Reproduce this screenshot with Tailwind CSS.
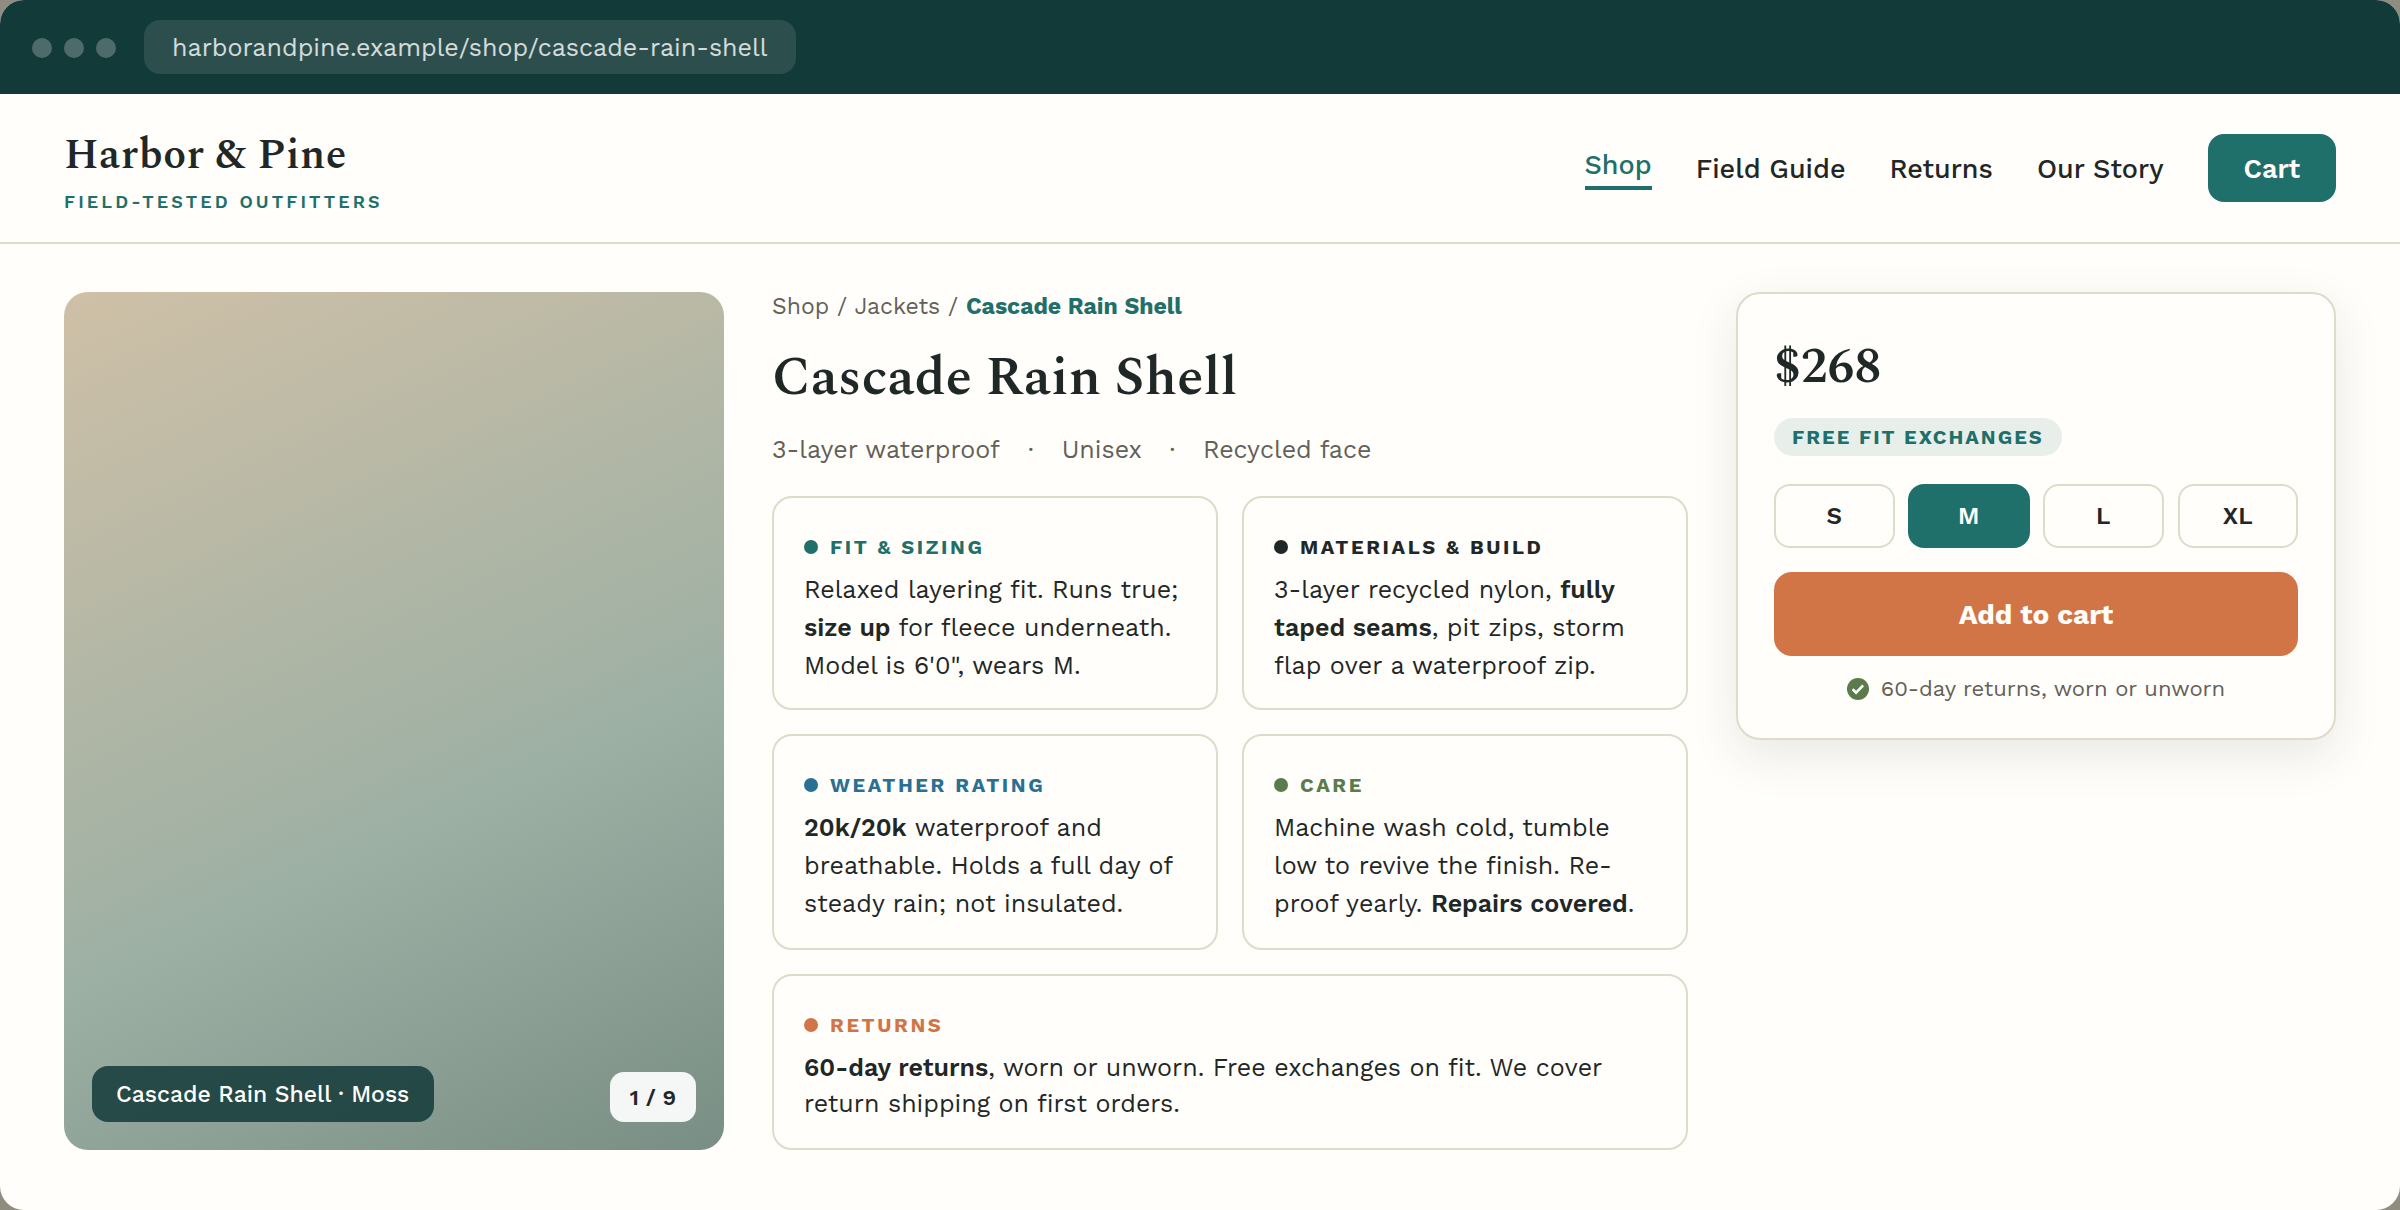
<!DOCTYPE html>
<html lang="en">
 <head>
  <meta charset="UTF-8"/>
  <meta name="viewport" content="width=device-width, initial-scale=1.0"/>
  <title>Cascade Rain Shell - Harbor &amp; Pine</title>
  <script src="https://cdn.jsdelivr.net/npm/@tailwindcss/browser@4"></script>
 </head>
 <body class="bg-[#8f8c80] font-['Work_Sans',Inter,sans-serif] text-[#1f2727]">
  <div class="h-[1210px] w-[2400px] overflow-hidden rounded-3xl bg-[#fffefa]">
   <!-- Browser bar -->
   <div class="flex h-[94px] items-center gap-7 bg-[#123a38] px-8">
    <div class="flex gap-3 pt-px">
     <span class="size-5 rounded-full bg-white/25"></span>
     <span class="size-5 rounded-full bg-white/25"></span>
     <span class="size-5 rounded-full bg-white/25"></span>
    </div>
    <div class="flex h-[54px] items-center rounded-2xl bg-white/11 pt-0.5 pr-[29px] pl-7 text-[25px] text-white/80">
     harborandpine.example/shop/cascade-rain-shell
    </div>
   </div>
   <!-- Header -->
   <header class="flex h-[150px] items-center justify-between border-b-2 border-[#e0dacb] px-16">
    <div>
     <div class="font-['Spectral','Liberation_Serif',serif] text-[42px] leading-[64px] font-semibold tracking-[0.01em]">Harbor &amp; Pine</div>
     <div class="mt-1 text-[18px] leading-[20px] font-semibold tracking-[0.173em] text-[#1f6f6b]">FIELD-TESTED OUTFITTERS</div>
    </div>
    <nav class="flex items-center gap-11 text-[27px] leading-8 font-medium">
     <a class="border-b-4 border-[#1f6f6b] pt-[3px] pb-[5px] text-[#1f6f6b]" href="#">Shop</a>
     <a class="pt-0.5" href="#">Field Guide</a>
     <a class="pt-0.5" href="#">Returns</a>
     <a class="pt-0.5" href="#">Our Story</a>
     <a class="flex h-[68px] items-center rounded-2xl bg-[#1f6f6b] px-9 pt-0.5 font-semibold text-[#fffefa]" href="#">Cart</a>
    </nav>
   </header>
   <!-- Product -->
   <main class="grid grid-cols-[660px_916px_600px] items-start gap-12 px-16 pt-12">
    <div class="flex h-[858px] items-end justify-between rounded-3xl bg-[linear-gradient(155deg,#cfc0a7_0%,#9db0a4_60%,#798e84_100%)] p-7">
     <div class="flex h-14 items-center rounded-2xl bg-[#123a38]/85 pt-0.5 pr-[25px] pl-6 text-[23px] font-medium text-[#fffefa]">Cascade Rain Shell · Moss</div>
     <div class="flex h-[50px] items-center rounded-[14px] bg-white/92 px-5 text-[22px] font-semibold">1 / 9</div>
    </div>

    <div>
     <p class="text-[23px] leading-[29px] text-[#636058]">Shop / Jackets / <span class="font-bold text-[#1f6f6b]">Cascade Rain Shell</span></p>
     <h1 class="mt-4 font-['Spectral','Liberation_Serif',serif] text-[54px] leading-[82px] font-semibold">Cascade Rain Shell</h1>
     <div class="mt-4 flex text-[25px] leading-[29px] text-[#636058]">
      <span>3-layer waterproof</span>
      <span class="w-[62px] text-center">·</span>
      <span>Unisex</span>
      <span class="w-[61px] text-center">·</span>
      <span>Recycled face</span>
     </div>
     <div class="mt-8 grid grid-cols-2 grid-rows-[214px_216px_176px] gap-6 text-[25px] leading-[38px]">
      <section class="rounded-[20px] border-2 border-[#e0dacb] px-[30px] pt-[37px]">
       <h2 class="flex items-center gap-3 text-xl leading-6 font-bold tracking-[0.13em] text-[#1f6f6b]">
        <span class="size-3.5 rounded-full bg-current"></span>FIT &amp; SIZING
       </h2>
       <p class="mt-3">Relaxed layering fit. Runs true;<br/><b class="font-semibold">size up</b> for fleece underneath.<br/>Model is 6'0", wears M.</p>
      </section>
      <section class="rounded-[20px] border-2 border-[#e0dacb] px-[30px] pt-[37px]">
       <h2 class="flex items-center gap-3 text-xl leading-6 font-bold tracking-[0.13em]">
        <span class="size-3.5 rounded-full bg-current"></span>MATERIALS &amp; BUILD
       </h2>
       <p class="mt-3">3-layer recycled nylon, <b class="font-semibold">fully<br/>taped seams</b>, pit zips, storm<br/>flap over a waterproof zip.</p>
      </section>
      <section class="rounded-[20px] border-2 border-[#e0dacb] px-[30px] pt-[37px]">
       <h2 class="flex items-center gap-3 text-xl leading-6 font-bold tracking-[0.13em] text-[#2a6f94]">
        <span class="size-3.5 rounded-full bg-current"></span>WEATHER RATING
       </h2>
       <p class="mt-3"><b class="font-semibold">20k/20k</b> waterproof and<br/>breathable. Holds a full day of<br/>steady rain; not insulated.</p>
      </section>
      <section class="rounded-[20px] border-2 border-[#e0dacb] px-[30px] pt-[37px]">
       <h2 class="flex items-center gap-3 text-xl leading-6 font-bold tracking-[0.13em] text-[#5b7b4c]">
        <span class="size-3.5 rounded-full bg-current"></span>CARE
       </h2>
       <p class="mt-3">Machine wash cold, tumble<br/>low to revive the finish. Re-<br/>proof yearly. <b class="font-semibold">Repairs covered</b>.</p>
      </section>
      <section class="col-span-2 rounded-[20px] border-2 border-[#e0dacb] px-[30px] pt-[37px]">
       <h2 class="flex items-center gap-3 text-xl leading-6 font-bold tracking-[0.13em] text-[#d17547]">
        <span class="size-3.5 rounded-full bg-current"></span>RETURNS
       </h2>
       <p class="mt-[13px] leading-9"><b class="font-semibold">60-day returns</b>, worn or unworn. Free exchanges on fit. We cover<br/>return shipping on first orders.</p>
      </section>
     </div>
    </div>

    <!-- Buy box -->
    <aside class="h-[448px] rounded-3xl border-2 border-[#e0dacb] bg-[#fffefa] px-9 pt-[35px] shadow-[0_16px_48px_rgba(31,39,39,0.10)]">
     <div class="font-['Spectral','Liberation_Serif',serif] text-[50px] leading-[76px] font-semibold">$268</div>
     <div class="mt-[13px] flex h-[38px] w-fit items-center rounded-full bg-[#1f6f6b]/10 px-[18px] text-xl font-bold tracking-[0.1em] text-[#1f6f6b]">FREE FIT EXCHANGES</div>
     <div class="mt-7 grid grid-cols-4 gap-3.5 text-2xl font-semibold">
      <button class="h-16 rounded-2xl border-2 border-[#e0dacb]">S</button>
      <button class="-mx-px h-16 rounded-2xl bg-[#1f6f6b] text-[#fffefa]">M</button>
      <button class="h-16 rounded-2xl border-2 border-[#e0dacb]">L</button>
      <button class="h-16 rounded-2xl border-2 border-[#e0dacb]">XL</button>
     </div>
     <button class="mt-6 h-[84px] w-full rounded-[18px] bg-[#d17547] pt-px text-[28px] font-bold text-[#fffefa]">Add to cart</button>
     <div class="mt-5 flex items-center justify-center gap-3 text-[22px] leading-[26px] text-[#636058]">
      <svg class="size-[22px]" viewBox="0 0 22 22" fill="none">
       <circle cx="11" cy="11" r="11" fill="#5b7b4c"/>
       <path d="M5.6 11.2l3.5 3.4 7-7.2" stroke="#fffefa" stroke-width="2.6"/>
      </svg>
      60-day returns, worn or unworn
     </div>
    </aside>
   </main>
  </div>
 </body>
</html>
